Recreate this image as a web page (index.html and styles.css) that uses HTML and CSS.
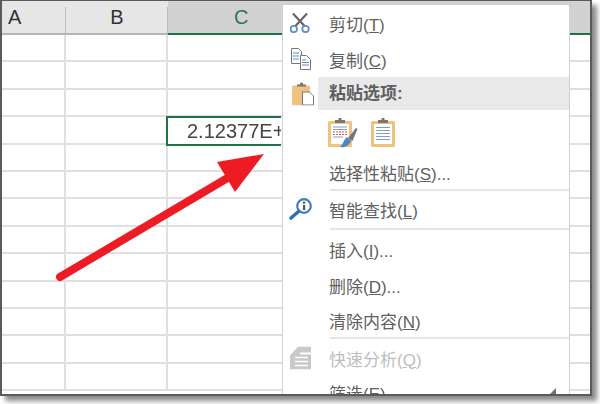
FILE: index.html
```html
<!DOCTYPE html>
<html lang="en">
  <head>
    <meta charset="UTF-8" />
    <title>Excel context menu</title>
    <link rel="stylesheet" href="styles.css">
  </head>
  <body>
    <div class="window">
      <div class="sheet">
        <div class="head">
          <div class="col-a">A</div>
          <div class="col-b">B</div>
          <div class="col-c">C</div>
        </div>
        <div class="row"><div></div><div></div><div></div></div>
        <div class="row"><div></div><div></div><div></div></div>
        <div class="row"><div></div><div></div><div></div></div>
        <div class="row"><div></div><div></div><div class="cell-sel">2.12377E+11</div></div>
        <div class="row"><div></div><div></div><div></div></div>
        <div class="row"><div></div><div></div><div></div></div>
        <div class="row"><div></div><div></div><div></div></div>
        <div class="row"><div></div><div></div><div></div></div>
        <div class="row"><div></div><div></div><div></div></div>
        <div class="row"><div></div><div></div><div></div></div>
        <div class="row"><div></div><div></div><div></div></div>
        <div class="row"><div></div><div></div><div></div></div>
        <div class="row"><div></div><div></div><div></div></div>
      </div>

      <!-- red annotation arrow -->
      <svg class="arrow" width="600" height="404" viewBox="0 0 600 404">
        <line x1="60" y1="277" x2="236" y2="173" stroke="#ed1c24" stroke-width="8" stroke-linecap="round" />
        <polygon points="217,162 264,154 235,192" fill="#ed1c24" />
      </svg>

      <div class="menu">
        <div class="item cut">
          <svg class="icon icon-cut" width="20" height="21" viewBox="0 0 20 21">
            <path d="M3 1l12 13M17 1L5 14" stroke="#666" stroke-width="2.200" fill="none" />
            <circle cx="3.800" cy="16.500" r="3.200" stroke="#5b8fc7" stroke-width="1.800" fill="#fff" />
            <circle cx="15.500" cy="16.500" r="3.200" stroke="#5b8fc7" stroke-width="1.800" fill="#fff" />
          </svg>
          <span>剪切(<u>T</u>)</span>
        </div>
        <div class="item copy">
          <svg class="icon icon-copy" width="21" height="22" viewBox="0 0 21 22">
            <path d="M.5.500h7l3 3v12H.5z" fill="#fff" stroke="#777" />
            <path d="M2 5h6M2 8h6M2 11h6" stroke="#5b8fc7" />
            <path d="M9.500 7.500h6l4 4v10h-10z" fill="#fff" stroke="#777" />
            <path d="M11 12h4M11 14.500h7M11 17h7" stroke="#5b8fc7" />
          </svg>
          <span>复制(<u>C</u>)</span>
        </div>
        <div class="item paste-head">
          <svg class="icon icon-paste" width="22" height="23" viewBox="0 0 22 23">
            <rect x="0" y="3" width="18" height="20" rx="1.500" fill="#eec27f" />
            <path d="M5 4V2h3V0h3v2h3v2z" fill="#777" />
            <path d="M10.500 9.500h7l4 4v9h-11z" fill="#fff" stroke="#777" />
          </svg>
          <div class="paste-title">粘贴选项:</div>
        </div>
        <div class="item paste-icons">
          <svg width="30" height="30" viewBox="0 0 30 30">
            <rect x="0" y="3" width="24" height="26" rx="1.500" fill="#eec27f" />
            <rect x="3" y="6" width="18" height="20" fill="#fff" />
            <path d="M7 5V2h3.500V0h3v2H17v3z" fill="#777" />
            <path d="M5 9h14M5 11.500h14M5 19h10" stroke="#7c9fce" />
            <path d="M5 14h14M5 16.500h14" stroke="#e2574c" stroke-dasharray="2 1" />
            <path d="M20 20l8-10 1.500 1-5 12z" fill="#777" />
            <path d="M19 19l4 4c-2 5-7 7-11 6 3-2 4-8 7-10z" fill="#4a86c5" />
          </svg>
          <svg width="24" height="30" viewBox="0 0 24 30">
            <rect x="0" y="3" width="24" height="26" rx="1.500" fill="#eec27f" />
            <rect x="3" y="6" width="18" height="20" fill="#fff" />
            <path d="M7 5V2h3.500V0h3v2H17v3z" fill="#777" />
            <path d="M5 9.500h14M5 12.500h14M5 15.500h14M5 18.500h14M5 21.500h14" stroke="#7c9fce" />
          </svg>
        </div>
        <div class="item special">
          <span>选择性粘贴(<u>S</u>)...</span>
        </div>
        <div class="sep"></div>
        <div class="item lookup">
          <svg class="icon icon-lookup" width="24" height="22" viewBox="0 0 24 22">
            <circle cx="15" cy="8" r="6.800" fill="#fff" stroke="#3f7fbf" stroke-width="2.200" />
            <path d="M9.500 13.500L2 20" stroke="#2f6fb2" stroke-width="3.500" stroke-linecap="round" />
            <rect x="14" y="7" width="2.200" height="5" fill="#555" />
            <rect x="14" y="3.500" width="2.200" height="2.200" fill="#555" />
          </svg>
          <span>智能查找(<u>L</u>)</span>
        </div>
        <div class="sep"></div>
        <div class="item insert">
          <span>插入(<u>I</u>)...</span>
        </div>
        <div class="item delete">
          <span>删除(<u>D</u>)...</span>
        </div>
        <div class="item clear">
          <span>清除内容(<u>N</u>)</span>
        </div>
        <div class="sep"></div>
        <div class="item quick off">
          <svg class="icon icon-quick" width="21" height="23" viewBox="0 0 21 23">
            <path d="M0 9l8-9h13v6H10v2h11v15H0z" fill="#c9c9c9" />
            <path d="M5 11h13M5 15h13M5 19h13" stroke="#fff" stroke-width="1.500" />
          </svg>
          <span>快速分析(<u>Q</u>)</span>
        </div>
        <div class="item filter">
          <span>筛选(<u>E</u>)</span>
          <div class="more"></div>
        </div>
      </div>
    </div>
  </body>
</html>
```

FILE: styles.css
```css
html,
body {
  margin: 0;
  padding: 0;
  background: #fff;
  overflow: hidden;
}
body {
  width: 600px;
  height: 404px;
  font-family: "Liberation Sans", "Noto Sans CJK SC", sans-serif;
}
.window {
  position: relative;
  box-sizing: border-box;
  width: 592px;
  height: 396px;
  border: 2px solid #5a5a5a;
  border-top-width: 1px;
  box-shadow: 5px 5px 5px #8a8a8a;
  background: #fff;
  overflow: hidden;
}
.sheet {
  filter: blur(0.3px);
}
.head {
  display: grid;
  grid-template-columns: 64px 102px 422px;
  height: 32px;
  background: #e6e6e6;
  border-bottom: 2px solid #b4b4b4;
  font-size: 20px;
  line-height: 32px;
  color: #333;
}
.col-a {
  padding-left: 6px;
  box-sizing: border-box;
}
.col-a,
.col-b {
  background: linear-gradient(#bdbdbd, #bdbdbd) right 6px / 1px 100% no-repeat;
}
.col-b {
  text-align: center;
}
.col-c {
  background: #d2d2d2;
  color: #2f7350;
  margin-bottom: -2px;
  border-bottom: 2px solid #217346;
  padding-left: 66px;
}
.row {
  display: grid;
  grid-template-columns: 64px 102px 422px;
  height: 27.4px;
  box-sizing: border-box;
  border-bottom: 2px solid #e0e0e0;
}
.row > div {
  border-right: 2px solid #e0e0e0;
}
.row > div:last-child {
  border-right: none;
}
.cell-sel {
  box-sizing: border-box;
  height: 30px;
  margin: -1px 0 0 -2px;
  width: 115px;
  border: 2px solid #217346;
  font-size: 20px;
  line-height: 26px;
  padding-left: 19px;
  color: #444;
  white-space: nowrap;
  overflow: hidden;
  background: #fff;
  position: relative;
}
.arrow {
  position: absolute;
  left: -2px;
  top: -1px;
}
.menu {
  position: absolute;
  left: 280px;
  top: 3px;
  width: 288px;
  height: 395px;
  box-sizing: border-box;
  background: #fff;
  border: 1px solid #d0d0d0;
  border-bottom: none;
  filter: blur(0.3px);
}
.item {
  position: relative;
  display: flex;
  align-items: center;
  box-sizing: border-box;
  padding-left: 46px;
  height: 36px;
  font-size: 17px;
  color: #5f5f5f;
  white-space: nowrap;
}
.item u {
  text-underline-offset: 1px;
}
.sep {
  height: 2px;
  margin-left: 47px;
  background: #e6e6e6;
}
.icon {
  position: absolute;
  top: 50%;
  transform: translateY(-50%);
}
.icon-cut,
.icon-quick {
  left: 7px;
}
.icon-copy {
  left: 8px;
}
.icon-paste {
  left: 9px;
}
.icon-lookup {
  left: 6px;
}
.paste-head {
  height: 33px;
  padding-left: 35px;
}
.paste-title {
  flex: 1;
  align-self: stretch;
  background: #e9e9e9;
  padding-left: 11px;
  line-height: 33px;
  font-weight: bold;
}
.paste-icons {
  height: 45px;
  padding-left: 45px;
  gap: 13px;
}
.special {
  height: 34px;
}
.lookup {
  height: 36px;
  margin-bottom: 1px;
}
.insert {
  height: 38px;
}
.delete {
  height: 35px;
}
.clear {
  height: 34px;
}
.quick {
  height: 38px;
}
.off {
  color: #bdbdbd;
}
.filter {
  height: 30px;
}
.more {
  position: absolute;
  left: 266px;
  top: 11px;
  width: 0;
  height: 0;
  border-left: 7px solid transparent;
  border-bottom: 7px solid #707070;
}
```
